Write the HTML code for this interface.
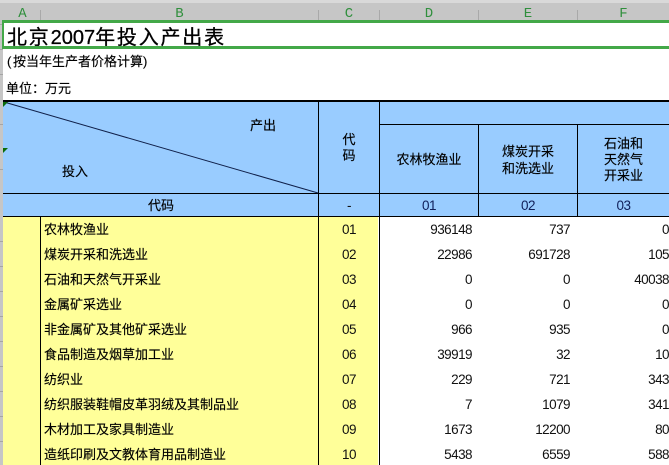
<!DOCTYPE html>
<html><head><meta charset="utf-8">
<style>
html,body{margin:0;padding:0;width:669px;height:465px;overflow:hidden;background:#fff}
#p{position:relative;width:669px;height:465px;overflow:hidden;font-family:"Liberation Sans","WenQuanYi Zen Hei","Noto Sans CJK SC",sans-serif;color:#000}
#p div{position:absolute}
.t{font-size:13px;line-height:16px;white-space:nowrap;margin-top:1px;-webkit-text-stroke:0.15px #000}
.c{text-align:center}
.n{font-size:13.5px;letter-spacing:-.55px;line-height:16px;text-align:right;white-space:nowrap;font-family:"Liberation Sans",sans-serif;color:#111;margin-top:1px}
.h{font-family:"Liberation Mono",monospace;font-size:14px;line-height:16px;color:#2f8f3c;text-align:center;top:6px}
.k{background:#000}
.s{background:#a9a9a9;top:10px;width:1px;height:10px}
.g{background:#a5a5a5;left:0;width:3px;height:1px}
.ti{letter-spacing:1.8px}
</style></head><body><div id="p">
<div style="left:0;top:0;width:669px;height:3px;background:#d9d9d9"></div>
<div style="left:0;top:3px;width:669px;height:17px;background:#c6c6c6"></div>
<div style="left:0;top:3px;width:3px;height:462px;background:#c6c6c6"></div>
<div class="h" style="left:4px;width:37px">A</div>
<div class="h" style="left:41px;width:277px">B</div>
<div class="h" style="left:319px;width:60px">C</div>
<div class="h" style="left:380px;width:98px">D</div>
<div class="h" style="left:479px;width:98px">E</div>
<div class="h" style="left:578px;width:91px">F</div>
<div class="s" style="left:40px"></div><div class="s" style="left:318px"></div><div class="s" style="left:379px"></div><div class="s" style="left:478px"></div><div class="s" style="left:577px"></div>

<div class="g" style="top:24px"></div><div class="g" style="top:49px"></div><div class="g" style="top:74px"></div><div class="g" style="top:124px"></div><div class="g" style="top:169px"></div><div class="g" style="top:241px"></div><div class="g" style="top:266px"></div><div class="g" style="top:291px"></div><div class="g" style="top:316px"></div><div class="g" style="top:341px"></div><div class="g" style="top:366px"></div><div class="g" style="top:391px"></div><div class="g" style="top:416px"></div><div class="g" style="top:441px"></div>

<!-- title selection -->
<div style="left:2px;top:20px;width:667px;height:3px;background:#43a848"></div>
<div style="left:2px;top:46px;width:667px;height:3px;background:#43a848"></div>
<div style="left:2px;top:20px;width:2px;height:29px;background:#43a848"></div>
<div style="left:7px;top:25px;font-size:20px;line-height:26px;white-space:nowrap;-webkit-text-stroke:0.3px #000"><span class="ti">北京</span>2007<span class="ti">年投入产出表</span></div>
<div class="t" style="left:7px;top:53px">(</div>
<div class="t" style="left:13px;top:53px">按当年生产者价格计算</div>
<div class="t" style="left:143px;top:53px">)</div>
<div class="t" style="left:6px;top:80px">单位：万元</div>

<!-- header -->
<div style="left:3px;top:102px;width:666px;height:114px;background:#99ccff"></div>
<div style="left:3px;top:217px;width:375px;height:248px;background:#ffff99"></div>
<div class="k" style="left:3px;top:100px;width:666px;height:2px"></div>
<div class="k" style="left:379px;top:124px;width:290px;height:1px"></div>
<div class="k" style="left:3px;top:193px;width:666px;height:1px"></div>
<div class="k" style="left:3px;top:216px;width:666px;height:1px"></div>
<div class="k" style="left:318px;top:102px;width:1px;height:363px"></div>
<div class="k" style="left:379px;top:102px;width:1px;height:363px"></div>
<div class="k" style="left:40px;top:216px;width:1px;height:249px"></div>
<div class="k" style="left:478px;top:124px;width:1px;height:92px"></div>
<div class="k" style="left:577px;top:124px;width:1px;height:92px"></div>
<svg style="position:absolute;left:0;top:0" width="669" height="465">
<line x1="4" y1="102" x2="318" y2="193" stroke="#10204a" stroke-width="1"/>
<polygon points="3,102 8,102 3,107" fill="#0a6b0a"/>
<polygon points="3,148 8,148 3,153" fill="#0a6b0a"/>
</svg>
<div class="t" style="left:250px;top:117px">产出</div>
<div class="t" style="left:62px;top:163px">投入</div>
<div class="t c" style="left:41px;top:197px;width:240px">代码</div>
<div class="t c" style="left:319px;top:131px;width:60px">代</div>
<div class="t c" style="left:319px;top:147px;width:60px">码</div>
<div class="t c" style="left:380px;top:151px;width:98px">农林牧渔业</div>
<div class="t c" style="left:479px;top:143px;width:98px">煤炭开采</div>
<div class="t c" style="left:479px;top:160px;width:98px">和洗选业</div>
<div class="t c" style="left:578px;top:135px;width:91px">石油和</div>
<div class="t c" style="left:578px;top:151px;width:91px">天然气</div>
<div class="t c" style="left:578px;top:167px;width:91px">开采业</div>
<div class="n c" style="left:319px;top:197px;width:60px;text-align:center">-</div>
<div class="n c" style="left:380px;top:197px;width:98px;text-align:center;color:#10205a">01</div>
<div class="n c" style="left:479px;top:197px;width:98px;text-align:center;color:#10205a">02</div>
<div class="n c" style="left:578px;top:197px;width:91px;text-align:center;color:#10205a">03</div>

<!-- rows -->
<div class="t" style="left:44px;top:221px">农林牧渔业</div><div class="n" style="left:319px;top:221px;width:60px;text-align:center">01</div><div class="n" style="left:380px;top:221px;width:92px">936148</div><div class="n" style="left:479px;top:221px;width:91px">737</div><div class="n" style="left:578px;top:221px;width:91px">0</div>
<div class="t" style="left:44px;top:246px">煤炭开采和洗选业</div><div class="n" style="left:319px;top:246px;width:60px;text-align:center">02</div><div class="n" style="left:380px;top:246px;width:92px">22986</div><div class="n" style="left:479px;top:246px;width:91px">691728</div><div class="n" style="left:578px;top:246px;width:91px">105</div>
<div class="t" style="left:44px;top:271px">石油和天然气开采业</div><div class="n" style="left:319px;top:271px;width:60px;text-align:center">03</div><div class="n" style="left:380px;top:271px;width:92px">0</div><div class="n" style="left:479px;top:271px;width:91px">0</div><div class="n" style="left:578px;top:271px;width:91px">40038</div>
<div class="t" style="left:44px;top:296px">金属矿采选业</div><div class="n" style="left:319px;top:296px;width:60px;text-align:center">04</div><div class="n" style="left:380px;top:296px;width:92px">0</div><div class="n" style="left:479px;top:296px;width:91px">0</div><div class="n" style="left:578px;top:296px;width:91px">0</div>
<div class="t" style="left:44px;top:321px">非金属矿及其他矿采选业</div><div class="n" style="left:319px;top:321px;width:60px;text-align:center">05</div><div class="n" style="left:380px;top:321px;width:92px">966</div><div class="n" style="left:479px;top:321px;width:91px">935</div><div class="n" style="left:578px;top:321px;width:91px">0</div>
<div class="t" style="left:44px;top:346px">食品制造及烟草加工业</div><div class="n" style="left:319px;top:346px;width:60px;text-align:center">06</div><div class="n" style="left:380px;top:346px;width:92px">39919</div><div class="n" style="left:479px;top:346px;width:91px">32</div><div class="n" style="left:578px;top:346px;width:91px">10</div>
<div class="t" style="left:44px;top:371px">纺织业</div><div class="n" style="left:319px;top:371px;width:60px;text-align:center">07</div><div class="n" style="left:380px;top:371px;width:92px">229</div><div class="n" style="left:479px;top:371px;width:91px">721</div><div class="n" style="left:578px;top:371px;width:91px">343</div>
<div class="t" style="left:44px;top:396px">纺织服装鞋帽皮革羽绒及其制品业</div><div class="n" style="left:319px;top:396px;width:60px;text-align:center">08</div><div class="n" style="left:380px;top:396px;width:92px">7</div><div class="n" style="left:479px;top:396px;width:91px">1079</div><div class="n" style="left:578px;top:396px;width:91px">341</div>
<div class="t" style="left:44px;top:421px">木材加工及家具制造业</div><div class="n" style="left:319px;top:421px;width:60px;text-align:center">09</div><div class="n" style="left:380px;top:421px;width:92px">1673</div><div class="n" style="left:479px;top:421px;width:91px">12200</div><div class="n" style="left:578px;top:421px;width:91px">80</div>
<div class="t" style="left:44px;top:446px">造纸印刷及文教体育用品制造业</div><div class="n" style="left:319px;top:446px;width:60px;text-align:center">10</div><div class="n" style="left:380px;top:446px;width:92px">5438</div><div class="n" style="left:479px;top:446px;width:91px">6559</div><div class="n" style="left:578px;top:446px;width:91px">588</div>
</div></body></html>
